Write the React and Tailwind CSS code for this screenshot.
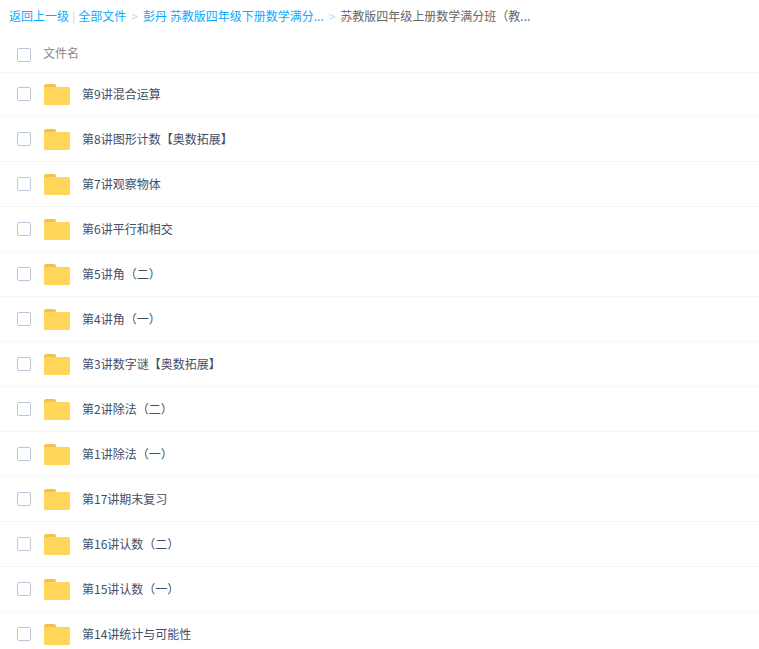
const files = [
  '第9讲混合运算',
  '第8讲图形计数【奥数拓展】',
  '第7讲观察物体',
  '第6讲平行和相交',
  '第5讲角（二）',
  '第4讲角（一）',
  '第3讲数字谜【奥数拓展】',
  '第2讲除法（二）',
  '第1讲除法（一）',
  '第17讲期末复习',
  '第16讲认数（二）',
  '第15讲认数（一）',
  '第14讲统计与可能性',
];

function Checkbox() {
  return <span className="block w-[14px] h-[14px] rounded-[2px] border border-[#bcc8d8] bg-white shrink-0" />;
}

function FolderIcon() {
  return (
    <svg width="26" height="21" viewBox="0 0 26 21" className="block shrink-0">
      <path d="M0 2a2 2 0 0 1 2-2h8a2 2 0 0 1 2 1.500V5H0z" fill="#f0c250" />
      <path d="M0 4.500a1.500 1.500 0 0 1 1.500-1.500h23A1.500 1.500 0 0 1 26 4.500v15a1.500 1.500 0 0 1-1.500 1.500h-23A1.500 1.500 0 0 1 0 19.500z" fill="#ffd659" />
    </svg>
  );
}

export default function App() {
  return (
    <div
      className="w-[759px] h-[649px] overflow-hidden bg-white text-xs"
      style={{ fontFamily: '"Noto Sans CJK SC", "Liberation Sans", sans-serif' }}
    >
      {/* Breadcrumb */}
      <div className="h-[32px] pl-[9px] flex items-center whitespace-nowrap text-[#09aaff]">
        <span>返回上一级</span>
        <span className="mx-[3px] text-[#c5d8e8]">|</span>
        <span>全部文件</span>
        <span className="mx-[5px] text-[#c5d8e8]">&gt;</span>
        <span>彭丹 苏教版四年级下册数学满分...</span>
        <span className="mx-[5px] text-[#c5d8e8]">&gt;</span>
        <span className="text-[#666]">苏教版四年级上册数学满分班（教...</span>
      </div>

      {/* Header */}
      <div className="h-[41px] pt-[6px] flex items-center pl-[17px] border-b border-[#f4f6f9]">
        <Checkbox />
        <span className="ml-[12px] mb-[4px] text-[#888]">文件名</span>
      </div>

      {/* File list */}
      <div className="-mt-px">
        {files.map((name) => (
          <div key={name} className="h-[45px] flex items-center pl-[17px] border-b border-[#f4f6f9]">
            <Checkbox />
            <span className="ml-[13px]"><FolderIcon /></span>
            <span className="ml-[12px] text-[#424e67] whitespace-nowrap">{name}</span>
          </div>
        ))}
      </div>
    </div>
  );
}
